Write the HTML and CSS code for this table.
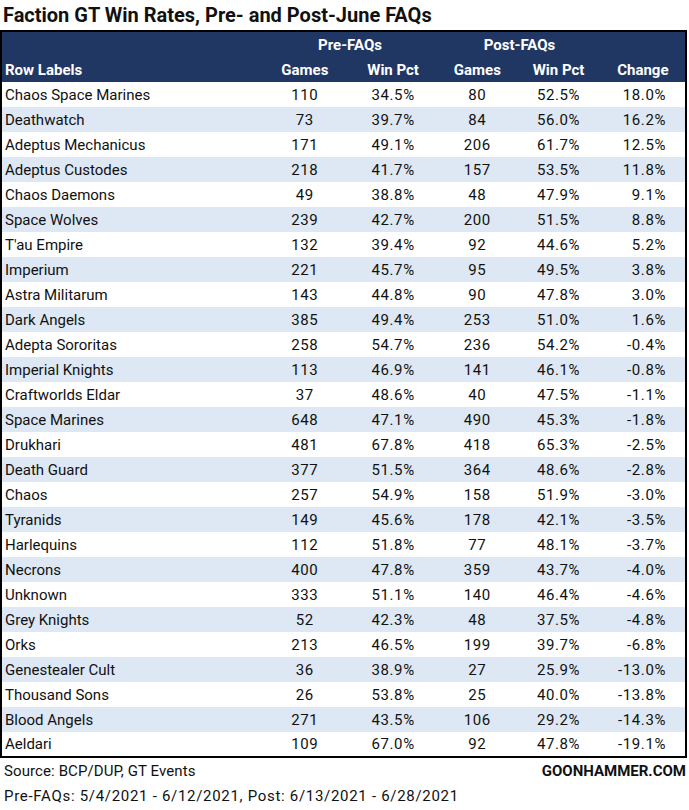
FILE: index.html
```html
<!DOCTYPE html>
<html lang="en">
<head>
<meta charset="utf-8">
<title>Faction GT Win Rates</title>
<link rel="stylesheet" href="styles.css">
</head>
<body>
<div class="page">
  <h1 class="title">Faction GT Win Rates, Pre- and Post-June FAQs</h1>
  <table class="stats">
    <colgroup>
      <col class="c-label"><col class="c-g1"><col class="c-w1"><col class="c-g2"><col class="c-w2"><col class="c-ch">
    </colgroup>
    <thead>
      <tr class="h1">
        <th></th>
        <th colspan="2">Pre-FAQs</th>
        <th colspan="2">Post-FAQs</th>
        <th></th>
      </tr>
      <tr class="h2">
        <th class="lbl">Row Labels</th>
        <th>Games</th>
        <th>Win Pct</th>
        <th>Games</th>
        <th>Win Pct</th>
        <th>Change</th>
      </tr>
    </thead>
    <tbody>
      <tr><td class="lbl">Chaos Space Marines</td><td>110</td><td>34.5%</td><td>80</td><td>52.5%</td><td class="chg">18.0%</td></tr>
      <tr><td class="lbl">Deathwatch</td><td>73</td><td>39.7%</td><td>84</td><td>56.0%</td><td class="chg">16.2%</td></tr>
      <tr><td class="lbl">Adeptus Mechanicus</td><td>171</td><td>49.1%</td><td>206</td><td>61.7%</td><td class="chg">12.5%</td></tr>
      <tr><td class="lbl">Adeptus Custodes</td><td>218</td><td>41.7%</td><td>157</td><td>53.5%</td><td class="chg">11.8%</td></tr>
      <tr><td class="lbl">Chaos Daemons</td><td>49</td><td>38.8%</td><td>48</td><td>47.9%</td><td class="chg">9.1%</td></tr>
      <tr><td class="lbl">Space Wolves</td><td>239</td><td>42.7%</td><td>200</td><td>51.5%</td><td class="chg">8.8%</td></tr>
      <tr><td class="lbl">T'au Empire</td><td>132</td><td>39.4%</td><td>92</td><td>44.6%</td><td class="chg">5.2%</td></tr>
      <tr><td class="lbl">Imperium</td><td>221</td><td>45.7%</td><td>95</td><td>49.5%</td><td class="chg">3.8%</td></tr>
      <tr><td class="lbl">Astra Militarum</td><td>143</td><td>44.8%</td><td>90</td><td>47.8%</td><td class="chg">3.0%</td></tr>
      <tr><td class="lbl">Dark Angels</td><td>385</td><td>49.4%</td><td>253</td><td>51.0%</td><td class="chg">1.6%</td></tr>
      <tr><td class="lbl">Adepta Sororitas</td><td>258</td><td>54.7%</td><td>236</td><td>54.2%</td><td class="chg">-0.4%</td></tr>
      <tr><td class="lbl">Imperial Knights</td><td>113</td><td>46.9%</td><td>141</td><td>46.1%</td><td class="chg">-0.8%</td></tr>
      <tr><td class="lbl">Craftworlds Eldar</td><td>37</td><td>48.6%</td><td>40</td><td>47.5%</td><td class="chg">-1.1%</td></tr>
      <tr><td class="lbl">Space Marines</td><td>648</td><td>47.1%</td><td>490</td><td>45.3%</td><td class="chg">-1.8%</td></tr>
      <tr><td class="lbl">Drukhari</td><td>481</td><td>67.8%</td><td>418</td><td>65.3%</td><td class="chg">-2.5%</td></tr>
      <tr><td class="lbl">Death Guard</td><td>377</td><td>51.5%</td><td>364</td><td>48.6%</td><td class="chg">-2.8%</td></tr>
      <tr><td class="lbl">Chaos</td><td>257</td><td>54.9%</td><td>158</td><td>51.9%</td><td class="chg">-3.0%</td></tr>
      <tr><td class="lbl">Tyranids</td><td>149</td><td>45.6%</td><td>178</td><td>42.1%</td><td class="chg">-3.5%</td></tr>
      <tr><td class="lbl">Harlequins</td><td>112</td><td>51.8%</td><td>77</td><td>48.1%</td><td class="chg">-3.7%</td></tr>
      <tr><td class="lbl">Necrons</td><td>400</td><td>47.8%</td><td>359</td><td>43.7%</td><td class="chg">-4.0%</td></tr>
      <tr><td class="lbl">Unknown</td><td>333</td><td>51.1%</td><td>140</td><td>46.4%</td><td class="chg">-4.6%</td></tr>
      <tr><td class="lbl">Grey Knights</td><td>52</td><td>42.3%</td><td>48</td><td>37.5%</td><td class="chg">-4.8%</td></tr>
      <tr><td class="lbl">Orks</td><td>213</td><td>46.5%</td><td>199</td><td>39.7%</td><td class="chg">-6.8%</td></tr>
      <tr><td class="lbl">Genestealer Cult</td><td>36</td><td>38.9%</td><td>27</td><td>25.9%</td><td class="chg">-13.0%</td></tr>
      <tr><td class="lbl">Thousand Sons</td><td>26</td><td>53.8%</td><td>25</td><td>40.0%</td><td class="chg">-13.8%</td></tr>
      <tr><td class="lbl">Blood Angels</td><td>271</td><td>43.5%</td><td>106</td><td>29.2%</td><td class="chg">-14.3%</td></tr>
      <tr><td class="lbl">Aeldari</td><td>109</td><td>67.0%</td><td>92</td><td>47.8%</td><td class="chg">-19.1%</td></tr>
    </tbody>
  </table>
  <div class="footer">
    <div class="footer-row">
      <span class="src">Source: BCP/DUP, GT Events</span>
      <span class="brand">GOONHAMMER.COM</span>
    </div>
    <div class="footer-row">
      <span class="dates">Pre-FAQs: 5/4/2021 - 6/12/2021, Post: 6/13/2021 - 6/28/2021</span>
    </div>
  </div>
</div>
</body>
</html>
```

FILE: styles.css
```css
* { box-sizing: border-box; }
html, body { margin: 0; padding: 0; background: #ffffff; }
body {
  font-family: Roboto, "Liberation Sans", sans-serif;
  color: #111111;
  width: 689px;
}
.page { display: flex; flex-direction: column; }
.title {
  margin: 0;
  height: 30px;
  padding: 3px 0 0 3px;
  font-size: 20px;
  line-height: 25px;
  font-weight: 700;
  letter-spacing: 0;
  color: #111111;
}
.stats {
  width: 687px;
  border-collapse: collapse;
  border: 2px solid #000000;
  table-layout: fixed;
  font-size: 15px;
}
.c-label { width: 260px; }
.c-g1 { width: 86px; }
.c-w1 { width: 90px; }
.c-g2 { width: 78px; }
.c-w2 { width: 84px; }
.c-ch { width: 85px; }
.stats thead tr { background: #203764; color: #ffffff; }
.stats th {
  font-weight: 700;
  font-size: 15px;
  text-align: center;
  padding: 0;
}
.stats tr.h1 th { height: 26px; vertical-align: middle; }
.stats tr.h2 th { height: 25px; vertical-align: middle; }
.stats th.lbl { text-align: left; padding-left: 3px; }
.stats td {
  height: 25px;
  padding: 0;
  text-align: center;
  vertical-align: middle;
  letter-spacing: 0.6px;
}
.stats td.lbl { text-align: left; padding-left: 3px; letter-spacing: 0; }
.stats td.chg { text-align: right; padding-right: 19px; }
.stats tbody tr:nth-child(even) { background: #dde8f4; }
.footer { display: flex; flex-direction: column; padding: 0 3px 0 4px; font-size: 15px; }
.footer-row {
  height: 25px;
  display: flex;
  justify-content: space-between;
  align-items: center;
}
.src { letter-spacing: 0.1px; }
.dates { letter-spacing: 0.7px; }
.brand { font-weight: 700; letter-spacing: 0; }
```
